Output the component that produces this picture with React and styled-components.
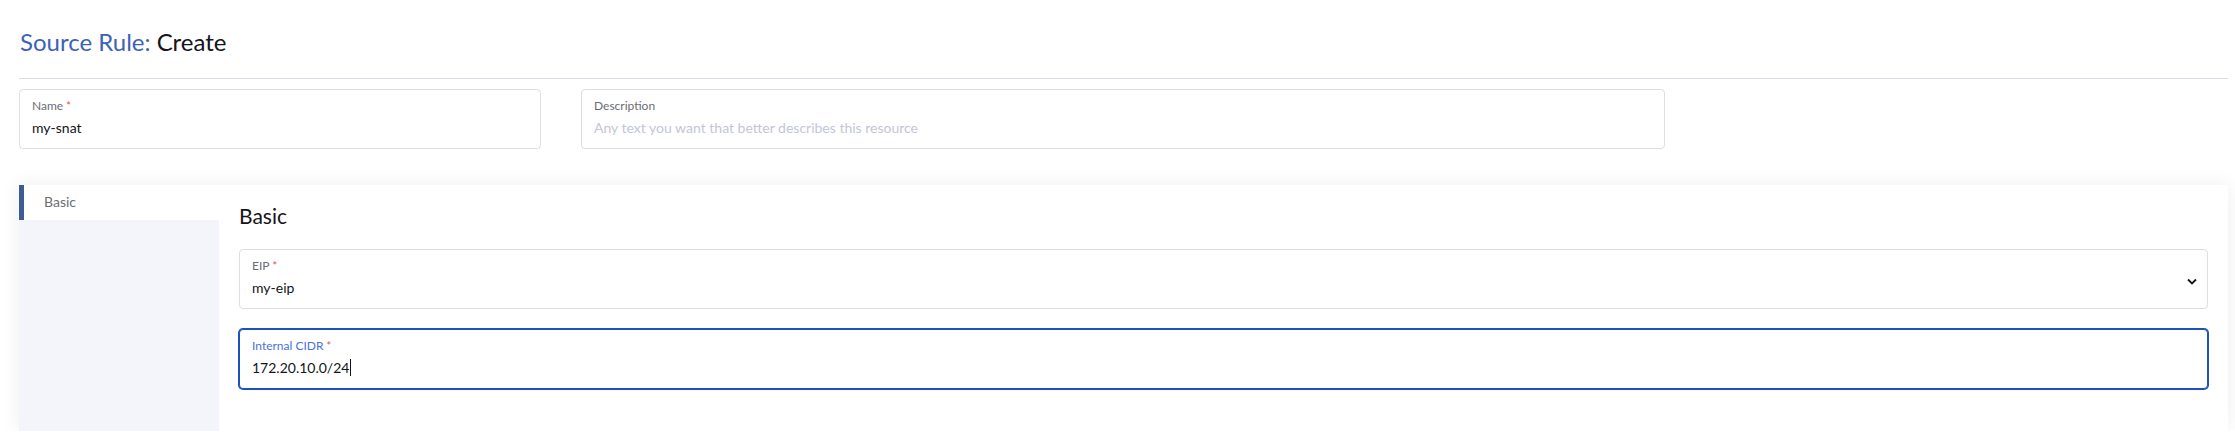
import React from "react";
import styled, { createGlobalStyle } from "styled-components";

const Global = createGlobalStyle`
  html, body { margin: 0; padding: 0; background: #ffffff; }
  body { font-family: Lato, "Open Sans", "Liberation Sans", sans-serif; color: #141419; }
  * { box-sizing: border-box; }
`;

const Page = styled.div`
  padding: 28px 7px 0 19px;
`;

const Title = styled.h1`
  margin: 0 0 0 1px;
  font-size: 24px;
  font-weight: 400;
  line-height: 1.2;
  color: #141419;
`;

const TitleLink = styled.span`
  color: #3d62b8;
`;

const Divider = styled.hr`
  margin: 21px 0 10px;
  border: none;
  border-top: 1px solid #dcdee7;
`;

const TopRow = styled.div`
  display: flex;
  gap: 40px;
`;

const Field = styled.div`
  position: relative;
  width: ${(p) => p.$width || "100%"};
  height: 60px;
  padding: 9px 12px;
  border: 1px solid ${(p) => (p.$focused ? "#1f50c0" : "#dcdee7")};
  box-shadow: ${(p) => (p.$focused ? "0 0 0 1px #1f50c0" : "none")};
  border-radius: 4px;
  background: #fff;
`;

const Label = styled.div`
  font-size: 12px;
  line-height: 14px;
  margin-bottom: 6px;
  color: ${(p) => (p.$focused ? "#4a72d8" : "#6c6c76")};
`;

const Req = styled.span`
  color: #f64747;
  margin-left: 3px;
  font-size: 11px;
`;

const Value = styled.div`
  font-size: 14px;
  line-height: 18px;
  color: ${(p) => (p.$placeholder ? "#c3c6d6" : "#141419")};
  display: flex;
  align-items: center;
`;

const Caret = styled.span`
  display: inline-block;
  width: 1px;
  height: 17px;
  background: #141419;
  margin-left: 1px;
`;

const Chevron = styled.svg`
  position: absolute;
  right: 10px;
  top: 28px;
`;

const Panel = styled.div`
  margin-top: 36px;
  display: flex;
  background: #fff;
  box-shadow: 0 0 20px rgba(20, 20, 40, 0.07);
  min-height: 246px;
`;

const Nav = styled.div`
  width: 200px;
  flex: none;
  display: flex;
  flex-direction: column;
  background: #f4f5fa;
`;

const Tab = styled.div`
  height: 35px;
  padding: 0 0 0 20px;
  border-left: 5px solid ${(p) => (p.$active ? "#3f5b94" : "transparent")};
  background: ${(p) => (p.$active ? "#ffffff" : "transparent")};
  font-size: 14px;
  line-height: 34px;
  color: #6c6c76;
`;

const Content = styled.div`
  flex: 1;
  padding: 18px 20px 40px;
  display: flex;
  flex-direction: column;
`;

const Heading = styled.h3`
  margin: 0 0 21px;
  font-size: 21px;
  font-weight: 400;
  line-height: 1.2;
  color: #141419;
`;

const Stack = styled.div`
  display: flex;
  flex-direction: column;
  gap: 20px;
`;

export default function App() {
  return (
    <>
      <Global />
      <Page>
        <Title>
          <TitleLink>Source Rule:</TitleLink> Create
        </Title>
        <Divider />
        <TopRow>
          <Field $width="522px">
            <Label>
              Name<Req>*</Req>
            </Label>
            <Value>my-snat</Value>
          </Field>
          <Field $width="1084px">
            <Label>Description</Label>
            <Value $placeholder>Any text you want that better describes this resource</Value>
          </Field>
        </TopRow>
        <Panel>
          <Nav>
            <Tab $active>Basic</Tab>
          </Nav>
          <Content>
            <Heading>Basic</Heading>
            <Stack>
              <Field>
                <Label>
                  EIP<Req>*</Req>
                </Label>
                <Value>my-eip</Value>
                <Chevron width="10" height="7" viewBox="0 0 10 7">
                  <polyline points="1,1.5 5,5.5 9,1.5" fill="none" stroke="#141419" strokeWidth="1.8" />
                </Chevron>
              </Field>
              <Field $focused>
                <Label $focused>
                  Internal CIDR<Req>*</Req>
                </Label>
                <Value>
                  172.20.10.0/24<Caret />
                </Value>
              </Field>
            </Stack>
          </Content>
        </Panel>
      </Page>
    </>
  );
}
